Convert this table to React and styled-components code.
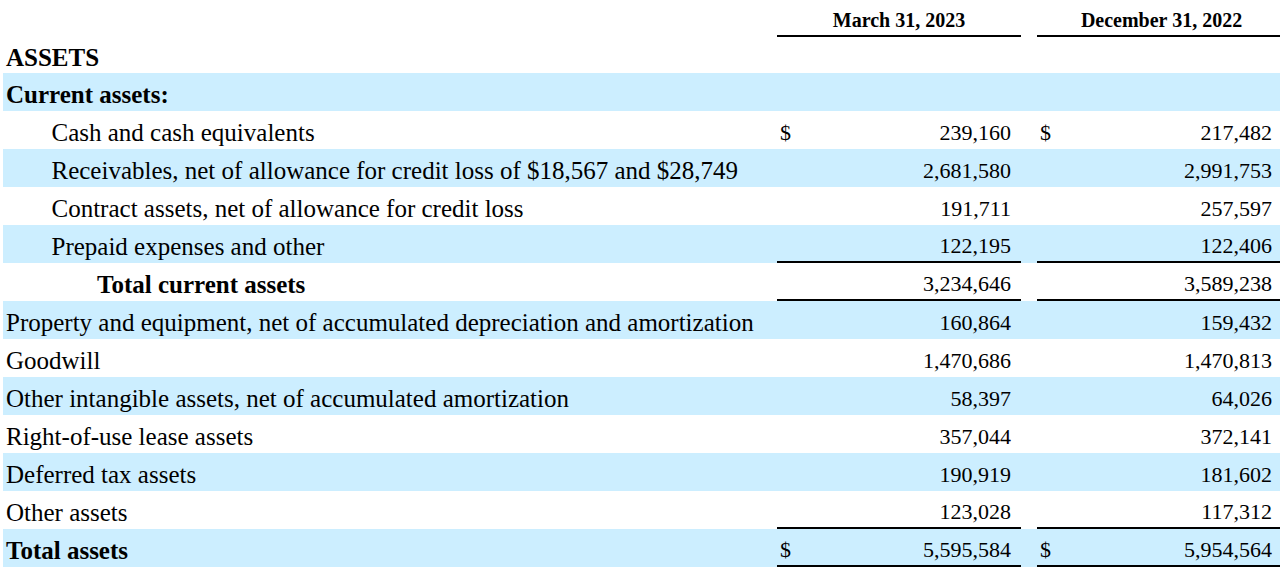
import React from "react";
import styled, { createGlobalStyle } from "styled-components";

const GlobalStyle = createGlobalStyle`
  body {
    margin: 0;
    background: #ffffff;
    font-family: "Liberation Serif", "Times New Roman", serif;
    color: #000000;
  }
`;

const Sheet = styled.div`
  width: 1280px;
  padding-left: 3px;
  box-sizing: border-box;
`;

const Row = styled.div`
  display: grid;
  grid-template-columns: 774px 244px 16px 243px;
  height: ${(p) => p.$height || 38}px;
  background: ${(p) => (p.$shaded ? "#cceeff" : "transparent")};
`;

const Label = styled.div`
  display: flex;
  align-items: center;
  padding-top: 5px;
  padding-left: ${(p) => 3 + (p.$indent || 0) * 45.5}px;
  box-sizing: border-box;
  font-size: 25px;
  font-weight: ${(p) => (p.$bold ? 700 : 400)};
  white-space: nowrap;
`;

const HeadCell = styled.div`
  display: flex;
  align-items: center;
  justify-content: center;
  padding-top: 5px;
  padding-left: ${(p) => p.$shift || 0}px;
  font-size: 20px;
  font-weight: 700;
  border-bottom: 2px solid #000;
  box-sizing: border-box;
`;

const Money = styled.div`
  display: flex;
  align-items: center;
  justify-content: space-between;
  padding: 5px ${(p) => p.$right}px 0 3px;
  font-size: 22px;
  box-sizing: border-box;
  border-bottom: ${(p) => (p.$rule ? "2px solid #000" : "none")};
`;

const Spacer = styled.div``;

const rows = [
  { label: "Current assets:", bold: true, shaded: true },
  { label: "Cash and cash equivalents", indent: 1, a: "239,160", b: "217,482", dollar: true },
  { label: "Receivables, net of allowance for credit loss of $18,567 and $28,749", indent: 1, a: "2,681,580", b: "2,991,753", shaded: true },
  { label: "Contract assets, net of allowance for credit loss", indent: 1, a: "191,711", b: "257,597" },
  { label: "Prepaid expenses and other", indent: 1, a: "122,195", b: "122,406", shaded: true, rule: true },
  { label: "Total current assets", indent: 2, bold: true, a: "3,234,646", b: "3,589,238", rule: true },
  { label: "Property and equipment, net of accumulated depreciation and amortization", a: "160,864", b: "159,432", shaded: true },
  { label: "Goodwill", a: "1,470,686", b: "1,470,813" },
  { label: "Other intangible assets, net of accumulated amortization", a: "58,397", b: "64,026", shaded: true },
  { label: "Right-of-use lease assets", a: "357,044", b: "372,141" },
  { label: "Deferred tax assets", a: "190,919", b: "181,602", shaded: true },
  { label: "Other assets", a: "123,028", b: "117,312", rule: true },
  { label: "Total assets", bold: true, a: "5,595,584", b: "5,954,564", dollar: true, shaded: true, rule: true },
];

const MoneyCell = ({ value, dollar, rule, right }) => (
  <Money $rule={rule} $right={right}>
    <span>{dollar ? "$" : ""}</span>
    <span>{value}</span>
  </Money>
);

export default function App() {
  return (
    <>
      <GlobalStyle />
      <Sheet>
        <Row $height={37}>
          <Spacer />
          <HeadCell>March 31, 2023</HeadCell>
          <Spacer />
          <HeadCell $shift={6}>December 31, 2022</HeadCell>
        </Row>
        <Row $height={36}>
          <Label $bold>ASSETS</Label>
        </Row>
        {rows.map((r) => (
          <Row key={r.label} $shaded={r.shaded}>
            <Label $indent={r.indent} $bold={r.bold}>
              {r.label}
            </Label>
            {r.a !== undefined ? (
              <>
                <MoneyCell value={r.a} dollar={r.dollar} rule={r.rule} right={10} />
                <Spacer />
                <MoneyCell value={r.b} dollar={r.dollar} rule={r.rule} right={8} />
              </>
            ) : null}
          </Row>
        ))}
      </Sheet>
    </>
  );
}
